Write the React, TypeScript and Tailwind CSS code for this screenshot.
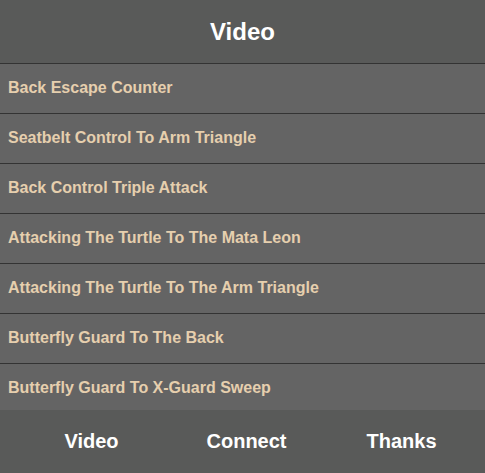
import React from "react";

const videos = [
  "Back Escape Counter",
  "Seatbelt Control To Arm Triangle",
  "Back Control Triple Attack",
  "Attacking The Turtle To The Mata Leon",
  "Attacking The Turtle To The Arm Triangle",
  "Butterfly Guard To The Back",
  "Butterfly Guard To X-Guard Sweep",
];

const tabs = ["Video", "Connect", "Thanks"];

export default function App() {
  return (
    <div className="flex h-screen flex-col bg-[#646464] font-['Liberation_Sans',Arial,sans-serif]">
      <header className="flex h-[63px] shrink-0 items-center justify-center bg-[#595a59]">
        <h1 className="text-[24px] font-bold text-white">Video</h1>
      </header>
      <ul className="flex-1 overflow-hidden">
        {videos.map((title) => (
          <li
            key={title}
            className="flex h-[50px] items-center border-t border-[#333] px-2 pb-[2px] text-[16px] font-bold text-[#e6cfae]"
          >
            {title}
          </li>
        ))}
      </ul>
      <nav className="grid h-[63px] shrink-0 grid-cols-3 items-center bg-[#595a59] pl-[14px] pr-[6px]">
        {tabs.map((tab) => (
          <span key={tab} className="pb-[1px] text-center text-[20px] font-bold text-white">
            {tab}
          </span>
        ))}
      </nav>
    </div>
  );
}
